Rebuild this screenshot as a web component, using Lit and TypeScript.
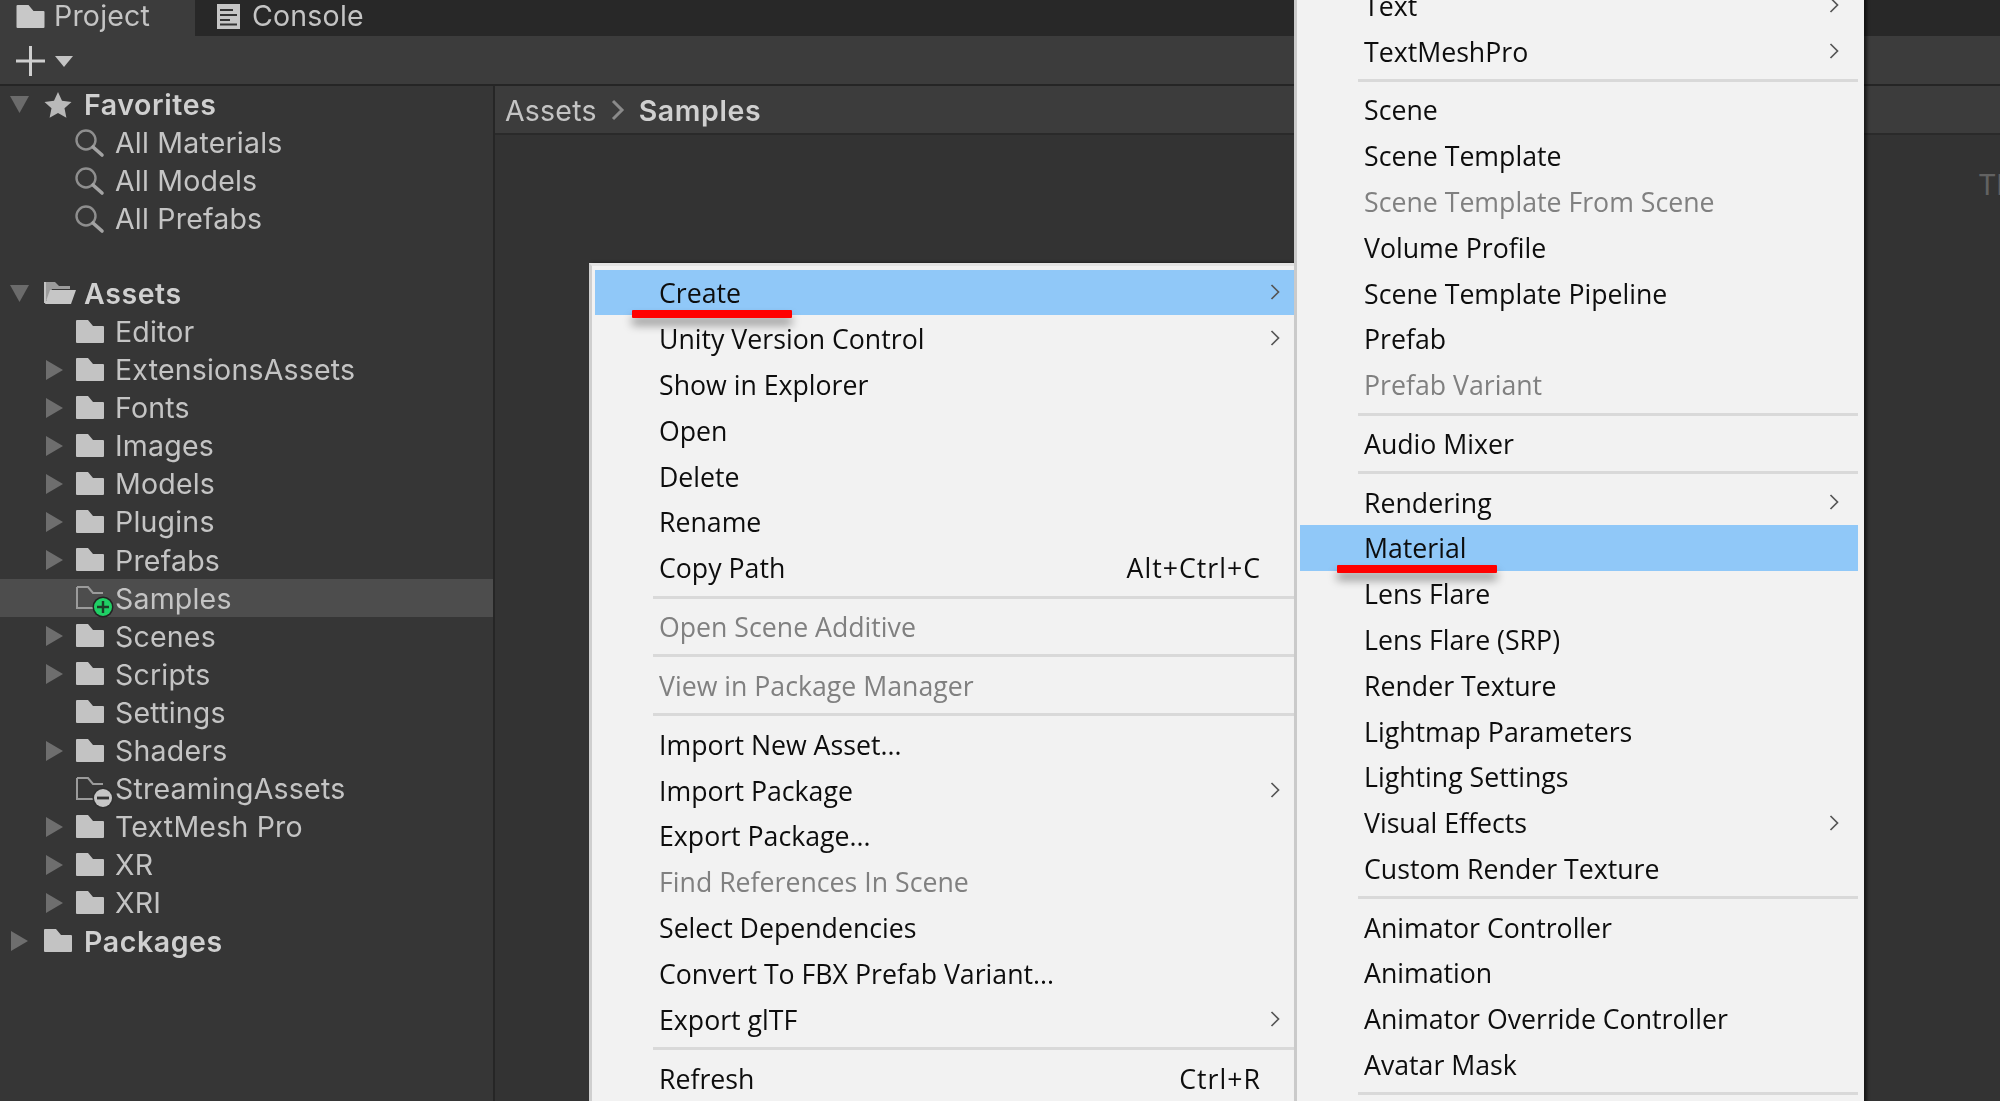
import { LitElement, html, css, svg } from 'lit';
import { customElement } from 'lit/decorators.js';

type Row = { label?: string; depth?: number; arrow?: 'down' | 'right'; icon?: string };
type Item = { label?: string; sub?: boolean; off?: boolean; on?: boolean; key?: string };

const TREE: Row[] = [
  { label: 'Favorites', depth: 0, arrow: 'down', icon: 'star' },
  { label: 'All Materials', depth: 1, icon: 'search' },
  { label: 'All Models', depth: 1, icon: 'search' },
  { label: 'All Prefabs', depth: 1, icon: 'search' },
  {},
  { label: 'Assets', depth: 0, arrow: 'down', icon: 'open' },
  { label: 'Editor', depth: 1, icon: 'folder' },
  { label: 'ExtensionsAssets', depth: 1, arrow: 'right', icon: 'folder' },
  { label: 'Fonts', depth: 1, arrow: 'right', icon: 'folder' },
  { label: 'Images', depth: 1, arrow: 'right', icon: 'folder' },
  { label: 'Models', depth: 1, arrow: 'right', icon: 'folder' },
  { label: 'Plugins', depth: 1, arrow: 'right', icon: 'folder' },
  { label: 'Prefabs', depth: 1, arrow: 'right', icon: 'folder' },
  { label: 'Samples', depth: 1, icon: 'added' },
  { label: 'Scenes', depth: 1, arrow: 'right', icon: 'folder' },
  { label: 'Scripts', depth: 1, arrow: 'right', icon: 'folder' },
  { label: 'Settings', depth: 1, icon: 'folder' },
  { label: 'Shaders', depth: 1, arrow: 'right', icon: 'folder' },
  { label: 'StreamingAssets', depth: 1, icon: 'removed' },
  { label: 'TextMesh Pro', depth: 1, arrow: 'right', icon: 'folder' },
  { label: 'XR', depth: 1, arrow: 'right', icon: 'folder' },
  { label: 'XRI', depth: 1, arrow: 'right', icon: 'folder' },
  { label: 'Packages', depth: 0, arrow: 'right', icon: 'folder' },
];

const MENU_A: Item[] = [
  { label: 'Create', sub: true, on: true },
  { label: 'Unity Version Control', sub: true },
  { label: 'Show in Explorer' },
  { label: 'Open' },
  { label: 'Delete' },
  { label: 'Rename' },
  { label: 'Copy Path', key: 'Alt+Ctrl+C' },
  {},
  { label: 'Open Scene Additive', off: true },
  {},
  { label: 'View in Package Manager', off: true },
  {},
  { label: 'Import New Asset...' },
  { label: 'Import Package', sub: true },
  { label: 'Export Package...' },
  { label: 'Find References In Scene', off: true },
  { label: 'Select Dependencies' },
  { label: 'Convert To FBX Prefab Variant...' },
  { label: 'Export glTF', sub: true },
  {},
  { label: 'Refresh', key: 'Ctrl+R' },
];

const MENU_B: Item[] = [
  { label: 'Text', sub: true },
  { label: 'TextMeshPro', sub: true },
  {},
  { label: 'Scene' },
  { label: 'Scene Template' },
  { label: 'Scene Template From Scene', off: true },
  { label: 'Volume Profile' },
  { label: 'Scene Template Pipeline' },
  { label: 'Prefab' },
  { label: 'Prefab Variant', off: true },
  {},
  { label: 'Audio Mixer' },
  {},
  { label: 'Rendering', sub: true },
  { label: 'Material', on: true },
  { label: 'Lens Flare' },
  { label: 'Lens Flare (SRP)' },
  { label: 'Render Texture' },
  { label: 'Lightmap Parameters' },
  { label: 'Lighting Settings' },
  { label: 'Visual Effects', sub: true },
  { label: 'Custom Render Texture' },
  {},
  { label: 'Animator Controller' },
  { label: 'Animation' },
  { label: 'Animator Override Controller' },
  { label: 'Avatar Mask' },
  {},
];

const FOLDER = 'M1 0h11l5 6h10a1 1 0 0 1 1 1v15a1 1 0 0 1-1 1H1a1 1 0 0 1-1-1V1a1 1 0 0 1 1-1z';
const HOLLOW = 'M1 1h11l5 6h10M1 1v21h17';

const icons: Record<string, unknown> = {
  folder: svg`<path d=${FOLDER} fill="#c3c3c3"/>`,
  open: svg`<path d="M1 1h10l4 4h11v3H8l-4 11-2 0z" fill="#9c9c9c"/><path d="M6 9h26l-5 14H1z" fill="#c6c6c6"/><path d="M1 1v21" stroke="#c3c3c3" stroke-width="2"/>`,
  star: svg`<path d="M14 0l4 8.800 9.500 1.100-7 6.400 1.900 9.400L14 21l-8.400 4.700 1.900-9.400-7-6.400L10 8.800z" fill="#b9b9b9"/>`,
  search: svg`<circle cx="10" cy="10" r="9.500" fill="none" stroke="#8e8e8e" stroke-width="2.400"/><path d="M17 17l9 8" stroke="#a3a3a3" stroke-width="3.600" stroke-linecap="round"/>`,
  added: svg`<path d=${HOLLOW} fill="none" stroke="#9b9b9b" stroke-width="2"/><circle cx="27" cy="21" r="10.500" fill="#232323"/><circle cx="27" cy="21" r="9" fill="#1fd065"/><path d="M21 21h12M27 15v12" stroke="#1c3d28" stroke-width="2.400"/>`,
  removed: svg`<path d=${HOLLOW} fill="none" stroke="#9b9b9b" stroke-width="2"/><circle cx="27" cy="21" r="10.500" fill="#303030"/><circle cx="27" cy="21" r="9" fill="#c6c6c6"/><path d="M21 21h12" stroke="#333" stroke-width="2.800"/>`,
};

@customElement('app-root')
export class AppRoot extends LitElement {
  static styles = css`
    :host {
      display: block;
      position: relative;
      width: 2000px;
      height: 1101px;
      overflow: hidden;
      background: #333333;
      font-family: Inter, "Liberation Sans", sans-serif;
      font-size: 28.500px;
      letter-spacing: 0.2px;
      color: #c4c4c4;
    }
    .tabs {
      display: flex;
      height: 36px;
      background: #282828;
      filter: blur(0.5px);
    }
    .tab {
      display: flex;
      align-items: center;
      gap: 9px;
      padding-left: 16px;
      height: 32px;
      line-height: 32px;
    }
    .tab-wrap { height: 36px; }
    .tab-wrap.active { width: 195px; background: #3c3c3c; }
    .tab.console { padding-left: 22px; gap: 12px; }
    .toolbar {
      position: relative;
      z-index: 1;
      display: flex;
      align-items: center;
      gap: 10px;
      height: 46px;
      padding: 2px 0 0 16px;
      background: #3c3c3c;
      border-bottom: 2px solid #252525;
    }
    .content { display: flex; height: 1015px; }
    .sidebar {
      width: 493px;
      flex: none;
      margin-top: -1px;
      border-right: 2px solid #262626;
      background: #363636;
    }
    .row {
      display: flex;
      align-items: center;
      height: 38.100px;
      white-space: nowrap;
      filter: blur(0.5px);
    }
    .row.d0 { padding-left: 10px; font-weight: 600; color: #d0d0d0; letter-spacing: 0.6px; }
    .row.d1 { padding-left: 46px; }
    .row.spacer { height: 37px; }
    .row.picked { background: #4d4d4d; }
    .arrow { flex: none; display: block; }
    .d0 .arrow { width: 19px; margin-right: 15px; }
    .d1 .arrow { width: 17px; margin-right: 13px; }
    .ico { flex: none; width: 28px; height: 24px; overflow: visible; display: block; }
    .d0 .ico { margin-right: 12px; }
    .d1 .ico { margin-right: 11px; }
    .main { flex: 1; min-width: 0; overflow: hidden; }
    .crumbs {
      display: flex;
      align-items: center;
      height: 46px;
      padding: 1px 0 0 10px;
      gap: 14px;
      background: #3c3c3c;
      border-bottom: 2px solid #2a2a2a;
      filter: blur(0.5px);
    }
    .crumbs b { font-weight: 600; color: #d0d0d0; letter-spacing: 0.6px; }
    .empty {
      padding: 31px 0 0 1483px;
      line-height: 38px;
      white-space: nowrap;
      color: #626262;
    }
    .menu {
      position: absolute;
      z-index: 2;
      box-sizing: border-box;
      background: #f2f2f2;
      color: #0d0d0d;
      font-family: "Open Sans", "Noto Sans", sans-serif;
      font-size: 26.700px;
      letter-spacing: 0;
      box-shadow: 3px 0 3px rgba(0, 0, 0, 0.55);
    }
    .menu-a {
      left: 589px;
      top: 263px;
      width: 705px;
      height: 900px;
      padding: 3.500px 0 0 3px;
      border-left: 3px solid #cfcfcf;
      border-top: 3px solid #e4e4e4;
      --item: 45.900px;
      --pad: 33px;
      --chev: 14px;
      --text: 64px;
    }
    .menu-b {
      left: 1294px;
      top: -17.500px;
      width: 570px;
      height: 1200px;
      padding: 0 6px 0 3px;
      border-left: 3px solid #cacaca;
      --item: 45.800px;
      --pad: 33px;
      --chev: 19px;
      --text: 64px;
    }
    .item {
      display: flex;
      align-items: center;
      justify-content: space-between;
      height: var(--item);
      padding: 0 var(--pad) 0 var(--text);
      white-space: nowrap;
      filter: blur(0.4px);
    }
    .item.on { background: #90c8f8; }
    .item.off { color: #808080; }
    .item svg { margin-right: calc(var(--chev) - var(--pad)); }
    .key { letter-spacing: 1px; }
    .sep { height: 12.900px; display: flex; align-items: center; padding-left: 58px; }
    .sep i { display: block; flex: 1; height: 3px; background: #d9d9d9; }
    .mark {
      position: absolute;
      z-index: 3;
      height: 8px;
      border-radius: 1px;
      background: #ff0000;
      box-shadow: 0 7px 10px rgba(0, 0, 0, 0.4);
    }
    .mark.a { left: 632px; top: 310px; width: 160px; }
    .mark.b { left: 1337px; top: 565px; width: 160px; }
  `;

  private arrow(dir?: string) {
    if (dir === 'down') return html`<svg class="arrow" viewBox="0 0 19 17" height="17"><path d="M0 0h19L9.500 17z" fill="#6b6b6b"/></svg>`;
    if (dir === 'right') return html`<svg class="arrow" viewBox="0 0 17 20" height="20"><path d="M0 0l17 10L0 20z" fill="#6e6e6e"/></svg>`;
    return html`<span class="arrow"></span>`;
  }

  private row(r: Row) {
    if (!r.label) return html`<div class="row spacer"></div>`;
    return html`<div class="row d${r.depth} ${r.label === 'Samples' ? 'picked' : ''}">
      ${this.arrow(r.arrow)}
      <svg class="ico" viewBox="0 0 28 24">${icons[r.icon!]}</svg>
      <span>${r.label}</span>
    </div>`;
  }

  private item(m: Item) {
    if (!m.label) return html`<div class="sep"><i></i></div>`;
    return html`<div class="item ${m.on ? 'on' : ''} ${m.off ? 'off' : ''}">
      <span>${m.label}</span>
      ${m.key ? html`<span class="key">${m.key}</span>` : ''}
      ${m.sub ? html`<svg width="10" height="16" viewBox="0 0 10 16"><path d="M1.500 1l7 7-7 7" fill="none" stroke="#555" stroke-width="1.700"/></svg>` : ''}
    </div>`;
  }

  render() {
    return html`
      <div class="tabs">
        <div class="tab-wrap active">
          <div class="tab">
            <svg width="29" height="23" viewBox="0 0 28 23"><path d=${FOLDER} fill="#c8c8c8"/></svg>
            <span>Project</span>
          </div>
        </div>
        <div class="tab-wrap">
          <div class="tab console">
            <svg width="23" height="25" viewBox="0 0 23 25">
              <path d="M0 0h23v25H0z" fill="#c6c6c6"/>
              <path d="M3 6h13M3 11h17M3 16h10M3 20.500h17" stroke="#333" stroke-width="2"/>
            </svg>
            <span>Console</span>
          </div>
        </div>
      </div>
      <div class="toolbar">
        <svg width="29" height="30" viewBox="0 0 29 30"><path d="M0 15h29M14.500 0v30" stroke="#cfcfcf" stroke-width="3"/></svg>
        <svg width="18" height="11" viewBox="0 0 18 11"><path d="M0 0h18L9 11z" fill="#c4c4c4"/></svg>
      </div>
      <div class="content">
        <div class="sidebar">${TREE.map((r) => this.row(r))}</div>
        <div class="main">
          <div class="crumbs">
            <span>Assets</span>
            <svg width="14" height="22" viewBox="0 0 14 22"><path d="M2 2l9 9-9 9" fill="none" stroke="#8a8a8a" stroke-width="3"/></svg>
            <b>Samples</b>
          </div>
          <div class="empty">This folder is empty</div>
        </div>
      </div>
      <div class="menu menu-a">${MENU_A.map((m) => this.item(m))}</div>
      <div class="menu menu-b">${MENU_B.map((m) => this.item(m))}</div>
      <div class="mark a"></div>
      <div class="mark b"></div>
    `;
  }
}
